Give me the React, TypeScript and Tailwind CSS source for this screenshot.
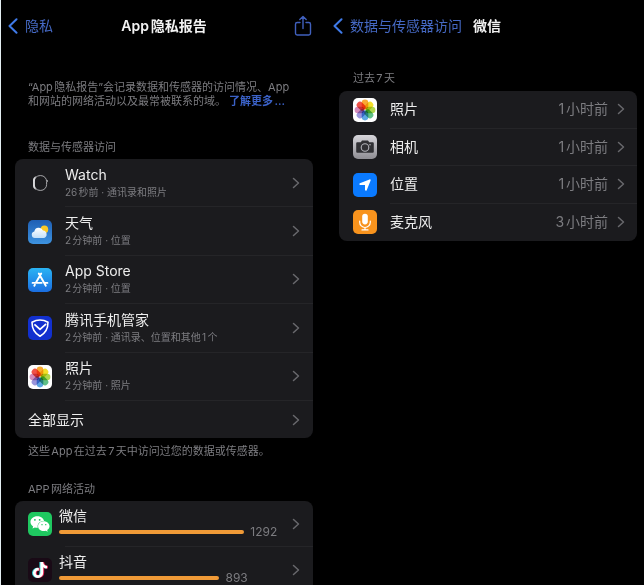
import React from "react";
import { FaLocationArrow, FaTiktok, FaWeixin } from "react-icons/fa6";

const petals = ["#f9a01e", "#f2dc13", "#a6d13a", "#4fb97a", "#4a9fe0", "#8f8bd8", "#cf7fb4", "#ee3f34"];

function PhotosIcon() {
  return (
    <svg viewBox="0 0 24 24" className="size-6 shrink-0" aria-hidden="true">
      <rect width="24" height="24" rx="5" fill="#fff" />
      {petals.map((fill, i) => (
        <rect
          key={fill}
          x="8.7"
          y="1.6"
          width="6.6"
          height="9.8"
          rx="3.3"
          fill={fill}
          fillOpacity="0.9"
          className="mix-blend-multiply"
          transform={`rotate(${i * 45} 12 12)`}
        />
      ))}
    </svg>
  );
}

function WatchIcon() {
  return (
    <svg viewBox="0 0 24 24" className="size-6 shrink-0" fill="none" aria-hidden="true">
      <rect x="6.2" y="4.6" width="12.4" height="14.8" rx="5.8" stroke="#a5a5a8" strokeWidth="1" />
      <path d="M8.4 5.200C6.200 5.800 5 7.200 5 9v6c0 1.800 1.200 3.200 3.400 3.800C7.200 17 6.900 15.500 6.900 12s.300-5 1.500-6.800z" fill="#d8d8da" />
      <path d="M19.300 9v2" stroke="#a5a5a8" strokeWidth="1" />
    </svg>
  );
}

function WeatherIcon() {
  return (
    <svg viewBox="0 0 24 24" className="size-6 shrink-0" aria-hidden="true">
      <defs>
        <linearGradient id="sky" x1="0" y1="0" x2="0" y2="1">
          <stop offset="0" stopColor="#1f5fb4" />
          <stop offset="1" stopColor="#3d93e0" />
        </linearGradient>
        <linearGradient id="cloud" x1="0" y1="0" x2="0" y2="1">
          <stop offset="0" stopColor="#fff" />
          <stop offset="1" stopColor="#c4e0f8" />
        </linearGradient>
      </defs>
      <rect width="24" height="24" rx="5" fill="url(#sky)" />
      <circle cx="16.400" cy="9.400" r="3.800" fill="#fbc926" />
      <path d="M6.800 18a3.300 3.300 0 0 1-.5-6.500 4.600 4.600 0 0 1 8.700-1 3.900 3.900 0 0 1 1.200 7.500z" fill="url(#cloud)" />
    </svg>
  );
}

function AppStoreIcon() {
  return (
    <svg viewBox="0 0 24 24" className="size-6 shrink-0" fill="none" aria-hidden="true">
      <defs>
        <linearGradient id="store" x1="0" y1="0" x2="0" y2="1">
          <stop offset="0" stopColor="#2ab4f4" />
          <stop offset="1" stopColor="#1a6de0" />
        </linearGradient>
      </defs>
      <rect width="24" height="24" rx="5" fill="url(#store)" />
      <g stroke="#fff" strokeWidth="1.900" strokeLinecap="round">
        <path d="M13.200 5.500 8 14.400M10.800 5.500l7 12.200M4.600 14.900h9M16.800 14.900h2.600M6.900 16.800l-.6 1" />
      </g>
    </svg>
  );
}

function ManagerIcon() {
  return (
    <svg viewBox="0 0 24 24" className="size-6 shrink-0" fill="none" aria-hidden="true">
      <rect width="24" height="24" rx="5" fill="#1230cf" />
      <path
        d="M12 4c2.300 0 5.300.700 8 2.300 0 6.200-2.500 11-8 14-5.500-3-8-7.800-8-14C6.700 4.700 9.700 4 12 4z"
        stroke="#fff"
        strokeWidth="1.600"
        strokeLinejoin="round"
      />
      <path d="m7 8.800 5 4.600 5.600-5" stroke="#fff" strokeWidth="1.800" strokeLinecap="round" strokeLinejoin="round" />
    </svg>
  );
}

function CameraIcon() {
  return (
    <svg viewBox="0 0 24 24" className="size-6 shrink-0" fill="none" aria-hidden="true">
      <defs>
        <linearGradient id="metal" x1="0" y1="0" x2="0" y2="1">
          <stop offset="0" stopColor="#d6d5da" />
          <stop offset="1" stopColor="#8f8e94" />
        </linearGradient>
      </defs>
      <rect width="24" height="24" rx="5" fill="url(#metal)" />
      <path
        d="M4.500 7.200h3.300L9 5.600h6l1.200 1.600h3.300c.800 0 1.300.500 1.300 1.300v8c0 .800-.500 1.300-1.300 1.300h-15c-.800 0-1.300-.500-1.300-1.300v-8c0-.800.500-1.300 1.300-1.300z"
        fill="#303034"
      />
      <circle cx="12" cy="12.500" r="3.800" stroke="#b4b4ba" strokeWidth="1.100" />
      <circle cx="17" cy="9.800" r=".7" fill="#d0d0d4" />
    </svg>
  );
}

function MicIcon() {
  return (
    <svg viewBox="0 0 24 24" className="size-6 shrink-0" fill="none" aria-hidden="true">
      <rect width="24" height="24" rx="5" fill="#f8931d" />
      <rect x="9.200" y="3.800" width="5.600" height="10.600" rx="2.800" fill="#fff" />
      <path d="M6.700 11v1.200a5.300 5.300 0 0 0 10.600 0V11M12 17.500v2.300M9 19.900h6" stroke="#fff" strokeWidth="1.200" strokeLinecap="round" />
    </svg>
  );
}

function LocationIcon() {
  return (
    <span className="flex size-6 shrink-0 items-center justify-center rounded-[5px] bg-[#0a7aff] text-white">
      <FaLocationArrow className="size-[14px]" />
    </span>
  );
}

function WeChatIcon() {
  return (
    <span className="flex size-6 shrink-0 items-center justify-center rounded-[5px] bg-[#1fc860] text-white">
      <FaWeixin className="size-5" />
    </span>
  );
}

function DouyinIcon() {
  return (
    <span className="grid size-6 shrink-0 place-items-center rounded-[5px] bg-[#190a16]">
      <FaTiktok className="col-start-1 row-start-1 size-4 -translate-x-px text-[#39d5dc]" />
      <FaTiktok className="col-start-1 row-start-1 size-4 translate-x-px text-[#e8285a]" />
      <FaTiktok className="z-10 col-start-1 row-start-1 size-4 text-white" />
    </span>
  );
}

function Chevron() {
  return (
    <svg viewBox="0 0 8 12" className="h-3 w-2 shrink-0" fill="none" aria-hidden="true">
      <path d="m1.500 1.500 5 4.500-5 4.500" stroke="#68686c" strokeWidth="1.500" strokeLinecap="round" strokeLinejoin="round" />
    </svg>
  );
}

function BackChevron() {
  return (
    <svg viewBox="0 0 10 16" className="h-4 w-[10px] shrink-0" fill="none" aria-hidden="true">
      <path d="M8.500 1.200 1.500 8l7 6.800" stroke="#3f7ae8" strokeWidth="2" strokeLinecap="round" strokeLinejoin="round" />
    </svg>
  );
}

const accessRows = [
  { name: "Watch", detail: "26秒前 · 通讯录和照片", Icon: WatchIcon },
  { name: "天气", detail: "2分钟前 · 位置", Icon: WeatherIcon },
  { name: "App Store", detail: "2分钟前 · 位置", Icon: AppStoreIcon },
  { name: "腾讯手机管家", detail: "2分钟前 · 通讯录、位置和其他1个", Icon: ManagerIcon },
  { name: "照片", detail: "2分钟前 · 照片", Icon: PhotosIcon },
];

const networkRows = [
  { name: "微信", count: 1292, percent: 82, Icon: WeChatIcon },
  { name: "抖音", count: 893, percent: 71, Icon: DouyinIcon },
];

const sensorRows = [
  { name: "照片", time: "1小时前", Icon: PhotosIcon },
  { name: "相机", time: "1小时前", Icon: CameraIcon },
  { name: "位置", time: "1小时前", Icon: LocationIcon },
  { name: "麦克风", time: "3小时前", Icon: MicIcon },
];

function ReportScreen() {
  return (
    <section className="h-full overflow-hidden border-l border-[#e4eef2] pr-[9px] pl-[14px]">
      <header className="grid h-[52px] grid-cols-[1fr_auto_1fr] items-center text-sm">
        <button type="button" className="-ml-[7px] flex items-center gap-[7px] justify-self-start text-[#4569c4]">
          <BackChevron />
          隐私
        </button>
        <h1 className="font-semibold text-[#f2f2f2]">App隐私报告</h1>
        <button type="button" aria-label="分享" className="justify-self-end">
          <svg viewBox="0 0 20 22" className="h-[22px] w-5" fill="none" stroke="#4060bd" strokeWidth="1.400" strokeLinecap="round" strokeLinejoin="round">
            <path d="M7 7.500H4.200c-1 0-1.700.700-1.700 1.700v9.100c0 1 .700 1.700 1.700 1.700h11.600c1 0 1.700-.700 1.700-1.700V9.200c0-1-.700-1.700-1.700-1.700H13M10 13.500V1.700M6.800 4.600 10 1.500l3.200 3.100" />
          </svg>
        </button>
      </header>

      <p className="mt-7 pl-[13px] text-[11px] leading-[14px] text-[#7c7c80]">
        “App隐私报告”会记录数据和传感器的访问情况、App
        <br />
        和网站的网络活动以及最常被联系的域。{" "}
        <a href="#more" className="font-semibold text-[#3b62c8]">了解更多...</a>
      </p>

      <h2 className="mt-8 px-[13px] text-[11px] leading-[14px] text-[#7c7c80]">数据与传感器访问</h2>
      <div className="mt-[5px] overflow-hidden rounded-lg bg-[#1b1b1e]">
        <ul className="grid h-[242px] grid-rows-5">
          {accessRows.map(({ name, detail, Icon }) => (
            <li key={name}>
              <button type="button" className="flex h-full w-full items-center gap-[13px] pl-[13px] text-left">
                <Icon />
                <span className="flex h-full flex-1 items-center justify-between border-b border-[#252528] pr-[13px]">
                  <span>
                    <span className="block text-sm leading-[18px] text-[#ededed]">{name}</span>
                    <span className="block text-[10px] leading-4 text-[#7c7c80]">{detail}</span>
                  </span>
                  <Chevron />
                </span>
              </button>
            </li>
          ))}
        </ul>
        <button type="button" className="flex h-[37px] w-full items-center justify-between px-[13px] text-sm text-[#ededed]">
          全部显示
          <Chevron />
        </button>
      </div>
      <p className="mt-1 px-[13px] text-[11px] leading-[18px] text-[#7c7c80]">这些App在过去7天中访问过您的数据或传感器。</p>

      <h2 className="mt-[22px] px-[13px] text-[11px] leading-[14px] text-[#7c7c80]">APP网络活动</h2>
      <ul className="mt-[5px] rounded-lg bg-[#1b1b1e]">
        {networkRows.map(({ name, count, percent, Icon }) => (
          <li key={name} className="h-[46px]">
            <button type="button" className="flex h-[45px] w-full items-center gap-[7px] px-[13px] text-left">
              <Icon />
              <span className="flex-1">
                <span className="block text-sm leading-4 text-[#ededed]">{name}</span>
                <span className="flex h-4 items-center gap-[6px]">
                  <span className="h-1 shrink-0 rounded-full bg-[#f09a37]" style={{ width: `${percent}%` }} />
                  <span className="text-xs text-[#7c7c80]">{count}</span>
                </span>
              </span>
              <Chevron />
            </button>
            <div className="ml-[50px] h-px bg-[#252528]" />
          </li>
        ))}
      </ul>
    </section>
  );
}

function SensorScreen() {
  return (
    <section className="h-full overflow-hidden pr-[7px] pl-[17px]">
      <header className="-ml-[6px] flex h-[52px] items-center gap-[11px] text-sm">
        <button type="button" className="flex items-center gap-[7px] text-[#4569c4]">
          <BackChevron />
          数据与传感器访问
        </button>
        <h1 className="font-semibold text-[#f2f2f2]">微信</h1>
      </header>

      <h2 className="mt-[19px] px-[14px] text-[11px] leading-[14px] text-[#7c7c80]">过去7天</h2>
      <ul className="mt-[6px] grid h-[150px] grid-rows-4 overflow-hidden rounded-lg bg-[#1b1b1e]">
        {sensorRows.map(({ name, time, Icon }) => (
          <li key={name} className="group">
            <button type="button" className="flex h-full w-full items-center gap-[13px] pl-[14px] text-left text-sm">
              <Icon />
              <span className="flex h-full flex-1 items-center border-b border-[#252528] pr-3 group-last:border-transparent">
                <span className="flex-1 text-[#ededed]">{name}</span>
                <span className="mr-[9px] text-[#7c7c80]">{time}</span>
                <Chevron />
              </span>
            </button>
          </li>
        ))}
      </ul>
    </section>
  );
}

export default function App() {
  return (
    <main
      lang="zh-CN"
      className="grid h-screen grid-cols-2 bg-black font-['Inter','Noto_Sans_CJK_SC',sans-serif] [text-autospace:normal]"
    >
      <ReportScreen />
      <SensorScreen />
    </main>
  );
}
